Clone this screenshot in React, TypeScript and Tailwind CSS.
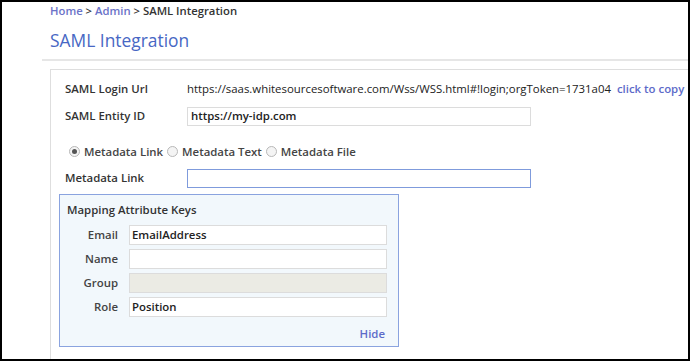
import React from "react"

const font = { fontFamily: '"Open Sans", "Liberation Sans", sans-serif' }

function Radio(props: { checked?: boolean; label: string }) {
  const { checked, label } = props
  return (
    <label className="flex items-center gap-[4px]">
      <span className="w-[11px] h-[11px] rounded-full border border-[#b8b8b8] bg-[#f4f4f4] flex items-center justify-center">
        {checked && <span className="w-[5px] h-[5px] rounded-full bg-[#555]"></span>}
      </span>
      <span>{label}</span>
    </label>
  )
}

function MapRow(props: { label: string; value?: string; disabled?: boolean }) {
  const { label, value, disabled } = props
  return (
    <div className="flex items-center h-[20px] mb-[4px]">
      <div className="w-[51px] text-right font-semibold text-[#444]">{label}</div>
      <div
        className={`ml-[11px] w-[258px] h-[20px] border border-[#dcdcdc] px-[2px] flex items-center font-semibold text-[#222] ${
          disabled ? "bg-[#ebebe4]" : "bg-white"
        }`}>
        {value}
      </div>
    </div>
  )
}

export default function App() {
  return (
    <div
      className="w-[690px] h-[361px] border-2 border-black bg-white overflow-hidden text-[11.4px] text-[#333]"
      style={font}>
      <div className="pl-[40px]">
        <div className="pl-[8px] pt-[1px] h-[20px] font-semibold text-[11.3px]">
          <span className="text-[#6a72c8]">Home</span>
          <span className="text-[#333]"> &gt; </span>
          <span className="text-[#6a72c8]">Admin</span>
          <span className="text-[#333]"> &gt; SAML Integration</span>
        </div>
        <div className="pl-[8px] h-[37px] pt-[6px] text-[17.4px] text-[#4767c4] leading-[24px]">
          SAML Integration
        </div>
        <div className="h-[2px] bg-[#e6e6e6]"></div>
        <div className="ml-[8px] mt-[8px] border border-[#dedede] w-[700px] h-[320px] pl-[14px] pt-[9px]">
          <div className="flex items-center h-[20px]">
            <div className="w-[122px] font-semibold text-[#333]">SAML Login Url</div>
            <div className="text-[#222]">
              https://saas.whitesourcesoftware.com/Wss/WSS.html#!login;orgToken=1731a04
            </div>
            <div className="ml-[6px] text-[#5d6bc9] font-semibold">click to copy</div>
          </div>
          <div className="flex items-center h-[20px] mt-[7px]">
            <div className="w-[122px] font-semibold text-[#333]">SAML Entity ID</div>
            <div className="w-[344px] h-[19px] border border-[#dcdcdc] px-[3px] flex items-center font-semibold text-[#222]">
              https://my-idp.com
            </div>
          </div>
          <div className="flex items-center gap-[4px] mt-[16px] ml-[4px] h-[20px] font-semibold text-[#444]">
            <Radio checked label="Metadata Link" />
            <Radio label="Metadata Text" />
            <Radio label="Metadata File" />
          </div>
          <div className="flex items-center h-[20px] mt-[6px]">
            <div className="w-[122px] font-semibold text-[#333]">Metadata Link</div>
            <div className="w-[344px] h-[19px] border border-[#7f9bdc] bg-white"></div>
          </div>
          <div className="-ml-[6px] mt-[6px] w-[340px] h-[153px] border border-[#8aa3df] bg-[#f2f8fc] pl-[7px] pt-[6px]">
            <div className="font-semibold text-[#333] h-[20px] mb-[4px]">Mapping Attribute Keys</div>
            <MapRow label="Email" value="EmailAddress" />
            <MapRow label="Name" />
            <MapRow label="Group" disabled />
            <MapRow label="Role" value="Position" />
            <div className="w-[318px] text-right font-semibold text-[#5d6bc9] mt-[8px]">Hide</div>
          </div>
        </div>
      </div>
    </div>
  )
}
